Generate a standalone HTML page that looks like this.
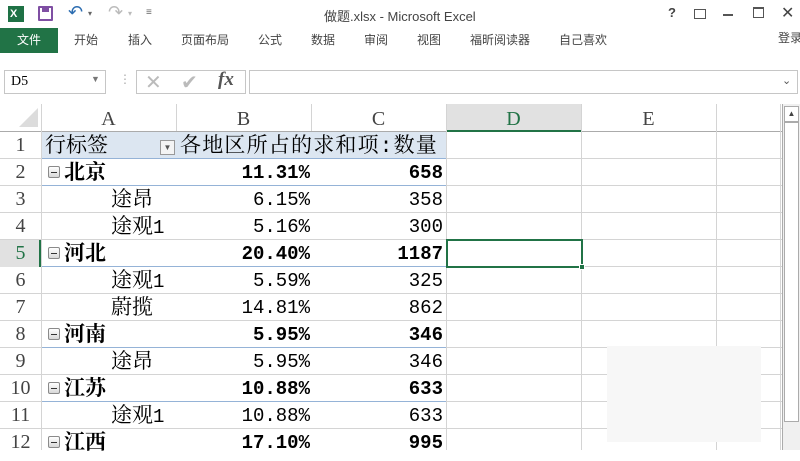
<!DOCTYPE html>
<html><head><meta charset="utf-8"><style>
*{margin:0;padding:0;box-sizing:border-box}
body{width:800px;height:450px;overflow:hidden;background:#fff;position:relative;font-family:"Liberation Sans","Noto Sans CJK SC",sans-serif}
.a{position:absolute}
.tab{position:absolute;top:31px;font-size:12px;color:#444;white-space:nowrap}
.ser{font-family:"Liberation Serif","Noto Serif CJK SC",serif}
.cell{position:absolute;height:27px;line-height:32px;font-size:21px;color:#000;white-space:nowrap;font-family:"Liberation Mono","Noto Serif CJK SC",serif;overflow:visible}
.n{font-size:19px;font-family:"Liberation Mono",monospace;line-height:28px}
.rh{position:absolute;left:0;width:41px;text-align:center;font-size:20px;color:#444;height:27px;line-height:27px}
.b{font-weight:bold}
.r{text-align:right}
.mb{position:absolute;width:12px;height:12px;border:1px solid #8a8a8a;background:linear-gradient(#fff,#d8d8d8);border-radius:2px}
.mb:after{content:"";position:absolute;left:2px;right:2px;top:5px;height:1px;background:#333}
</style></head><body>
<div class="a" style="left:8px;top:6px;width:16px;height:16px;background:#1e7145;color:#fff;font-size:11px;font-weight:bold;line-height:16px;padding-left:2px">X</div>
<div class="a" style="left:38px;top:6px;width:15px;height:15px;border:2px solid #7f4fa3;border-radius:1px"><div style="position:absolute;left:2px;top:0;width:7px;height:4px;background:#7f4fa3"></div></div>
<div class="a" style="left:68px;top:2px;font-size:18px;color:#2b6cb0">↶</div>
<div class="a" style="left:88px;top:9px;font-size:8px;color:#666">▾</div>
<div class="a" style="left:108px;top:2px;font-size:18px;color:#bbb">↷</div>
<div class="a" style="left:128px;top:9px;font-size:8px;color:#bbb">▾</div>
<div class="a" style="left:146px;top:7px;font-size:10px;color:#666">≡</div>
<div class="a" style="left:324px;top:6px;font-size:13px;color:#444">做题.xlsx - Microsoft Excel</div>
<div class="a" style="left:668px;top:5px;font-size:13px;color:#444;font-weight:bold">?</div>
<div class="a" style="left:694px;top:9px;width:12px;height:10px;border:1px solid #555"></div>
<div class="a" style="left:723px;top:14px;width:10px;height:2px;background:#555"></div>
<div class="a" style="left:753px;top:7px;width:11px;height:11px;border:1px solid #555;border-top-width:2px"></div>
<div class="a" style="left:781px;top:3px;font-size:16px;color:#444">✕</div>
<div class="a" style="left:0;top:28px;width:58px;height:25px;background:#217346;color:#fff;font-size:12px;text-align:center;line-height:25px">文件</div>
<div class="tab" style="left:74px">开始</div>
<div class="tab" style="left:128px">插入</div>
<div class="tab" style="left:181px">页面布局</div>
<div class="tab" style="left:258px">公式</div>
<div class="tab" style="left:311px">数据</div>
<div class="tab" style="left:364px">审阅</div>
<div class="tab" style="left:417px">视图</div>
<div class="tab" style="left:470px">福昕阅读器</div>
<div class="tab" style="left:559px">自己喜欢</div>
<div class="tab" style="left:778px;top:29px">登录</div>
<div class="a ser" style="left:4px;top:70px;width:102px;height:24px;border:1px solid #c6c6c6;font-size:14px;line-height:22px;padding-left:6px">D5</div>
<div class="a" style="left:91px;top:74px;font-size:9px;color:#777">▼</div>
<div class="a" style="left:119px;top:72px;font-size:12px;color:#aaa">⋮</div>
<div class="a" style="left:136px;top:70px;width:110px;height:24px;border:1px solid #c6c6c6"></div>
<div class="a" style="left:145px;top:70px;font-size:20px;color:#bbb">✕</div>
<div class="a" style="left:181px;top:70px;font-size:20px;color:#bbb">✔</div>
<div class="a ser" style="left:218px;top:69px;font-size:19px;color:#555;font-style:italic;font-weight:bold">fx</div>
<div class="a" style="left:249px;top:70px;width:549px;height:24px;border:1px solid #c6c6c6"></div>
<div class="a" style="left:782px;top:74px;font-size:11px;color:#555">⌄</div>
<div class="a" style="left:0;top:104px;width:782px;height:28px;border-bottom:1px solid #ababab"></div>
<div class="a" style="left:19px;top:108px;width:0;height:0;border-left:19px solid transparent;border-bottom:19px solid #dcdcdc"></div>
<div class="a" style="left:446px;top:104px;width:136px;height:28px;background:#e1e1e1;border-bottom:2px solid #217346"></div>
<div class="a ser" style="left:41px;top:104px;width:782px;height:27px;font-size:20px;line-height:30px;color:#444">
<span class="a" style="left:0;width:135px;text-align:center">A</span>
<span class="a" style="left:135px;width:135px;text-align:center">B</span>
<span class="a" style="left:270px;width:135px;text-align:center">C</span>
<span class="a" style="left:405px;width:135px;text-align:center;color:#217346">D</span>
<span class="a" style="left:540px;width:135px;text-align:center">E</span>
</div>
<svg class="a" style="left:0;top:104px" width="782" height="346">
<g stroke="#d4d4d4" stroke-width="1">
<line x1="41.5" y1="0" x2="41.5" y2="346"/>
<line x1="176.5" y1="0" x2="176.5" y2="27"/>
<line x1="311.5" y1="0" x2="311.5" y2="27"/>
<line x1="446.5" y1="0" x2="446.5" y2="346"/>
<line x1="581.5" y1="0" x2="581.5" y2="346"/>
<line x1="716.5" y1="0" x2="716.5" y2="346"/>
<line x1="780.5" y1="0" x2="780.5" y2="346"/>
<line x1="0" y1="54.5" x2="782" y2="54.5"/><line x1="0" y1="81.5" x2="782" y2="81.5"/>
<line x1="0" y1="108.5" x2="782" y2="108.5"/><line x1="0" y1="135.5" x2="782" y2="135.5"/>
<line x1="0" y1="162.5" x2="782" y2="162.5"/><line x1="0" y1="189.5" x2="782" y2="189.5"/>
<line x1="0" y1="216.5" x2="782" y2="216.5"/><line x1="0" y1="243.5" x2="782" y2="243.5"/>
<line x1="0" y1="270.5" x2="782" y2="270.5"/><line x1="0" y1="297.5" x2="782" y2="297.5"/>
<line x1="0" y1="324.5" x2="782" y2="324.5"/>
</g>
</svg>
<div class="a" style="left:42px;top:132px;width:404px;height:26px;background:#dce6f1"></div>
<div class="a" style="left:42px;top:158px;width:404px;height:1px;background:#95b3d7"></div>
<div class="a" style="left:42px;top:185px;width:404px;height:1px;background:#95b3d7"></div>
<div class="a" style="left:42px;top:266px;width:404px;height:1px;background:#95b3d7"></div>
<div class="a" style="left:42px;top:347px;width:404px;height:1px;background:#95b3d7"></div>
<div class="a" style="left:42px;top:401px;width:404px;height:1px;background:#95b3d7"></div>
<div class="a" style="left:0;top:240px;width:41px;height:27px;background:#e1e1e1;border-right:2px solid #217346"></div>
<div class="ser">
<div class="rh" style="top:132px">1</div><div class="rh" style="top:159px">2</div><div class="rh" style="top:186px">3</div>
<div class="rh" style="top:213px">4</div><div class="rh" style="top:240px;color:#217346">5</div><div class="rh" style="top:267px">6</div>
<div class="rh" style="top:294px">7</div><div class="rh" style="top:321px">8</div><div class="rh" style="top:348px">9</div>
<div class="rh" style="top:375px">10</div><div class="rh" style="top:402px">11</div><div class="rh" style="top:429px">12</div>
</div>
<div>
<div class="cell" style="left:45px;top:132px">行标签</div>
<div class="a" style="left:160px;top:140px;width:15px;height:15px;border:1px solid #999;background:#f4f4f4;font-size:8px;text-align:center;line-height:14px;color:#555">▼</div>
<div class="cell" style="left:180px;top:132px;letter-spacing:1.2px">各地区所占的求和项:数量</div>
<div class="mb" style="left:48px;top:166px"></div><div class="cell b" style="left:64px;top:159px">北京</div>
<div class="cell n b r" style="left:176px;width:134px;top:159px">11.31%</div><div class="cell n b r" style="left:311px;width:132px;top:159px">658</div>
<div class="cell" style="left:111px;top:186px">途昂</div>
<div class="cell n r" style="left:176px;width:134px;top:186px">6.15%</div><div class="cell n r" style="left:311px;width:132px;top:186px">358</div>
<div class="cell" style="left:111px;top:213px">途观<span class="n">1</span></div>
<div class="cell n r" style="left:176px;width:134px;top:213px">5.16%</div><div class="cell n r" style="left:311px;width:132px;top:213px">300</div>
<div class="mb" style="left:48px;top:247px"></div><div class="cell b" style="left:64px;top:240px">河北</div>
<div class="cell n b r" style="left:176px;width:134px;top:240px">20.40%</div><div class="cell n b r" style="left:311px;width:132px;top:240px">1187</div>
<div class="cell" style="left:111px;top:267px">途观<span class="n">1</span></div>
<div class="cell n r" style="left:176px;width:134px;top:267px">5.59%</div><div class="cell n r" style="left:311px;width:132px;top:267px">325</div>
<div class="cell" style="left:111px;top:294px">蔚揽</div>
<div class="cell n r" style="left:176px;width:134px;top:294px">14.81%</div><div class="cell n r" style="left:311px;width:132px;top:294px">862</div>
<div class="mb" style="left:48px;top:328px"></div><div class="cell b" style="left:64px;top:321px">河南</div>
<div class="cell n b r" style="left:176px;width:134px;top:321px">5.95%</div><div class="cell n b r" style="left:311px;width:132px;top:321px">346</div>
<div class="cell" style="left:111px;top:348px">途昂</div>
<div class="cell n r" style="left:176px;width:134px;top:348px">5.95%</div><div class="cell n r" style="left:311px;width:132px;top:348px">346</div>
<div class="mb" style="left:48px;top:382px"></div><div class="cell b" style="left:64px;top:375px">江苏</div>
<div class="cell n b r" style="left:176px;width:134px;top:375px">10.88%</div><div class="cell n b r" style="left:311px;width:132px;top:375px">633</div>
<div class="cell" style="left:111px;top:402px">途观<span class="n">1</span></div>
<div class="cell n r" style="left:176px;width:134px;top:402px">10.88%</div><div class="cell n r" style="left:311px;width:132px;top:402px">633</div>
<div class="mb" style="left:48px;top:436px"></div><div class="cell b" style="left:64px;top:429px">江西</div>
<div class="cell n b r" style="left:176px;width:134px;top:429px">17.10%</div><div class="cell n b r" style="left:311px;width:132px;top:429px">995</div>
</div>
<div class="a" style="left:446px;top:239px;width:137px;height:29px;border:2px solid #217346"></div>
<div class="a" style="left:579px;top:264px;width:6px;height:6px;background:#217346;border:1px solid #fff"></div>
<div class="a" style="left:607px;top:346px;width:154px;height:96px;background:#f7f7f7"></div>
<div class="a" style="left:782px;top:104px;width:18px;height:346px;background:#f0f0f0;border-left:1px solid #ababab"></div>
<div class="a" style="left:784px;top:106px;width:15px;height:16px;background:#fff;border:1px solid #ababab;font-size:8px;text-align:center;line-height:14px;color:#444">▲</div>
<div class="a" style="left:784px;top:122px;width:15px;height:300px;background:#fff;border:1px solid #ababab"></div>
</body></html>
